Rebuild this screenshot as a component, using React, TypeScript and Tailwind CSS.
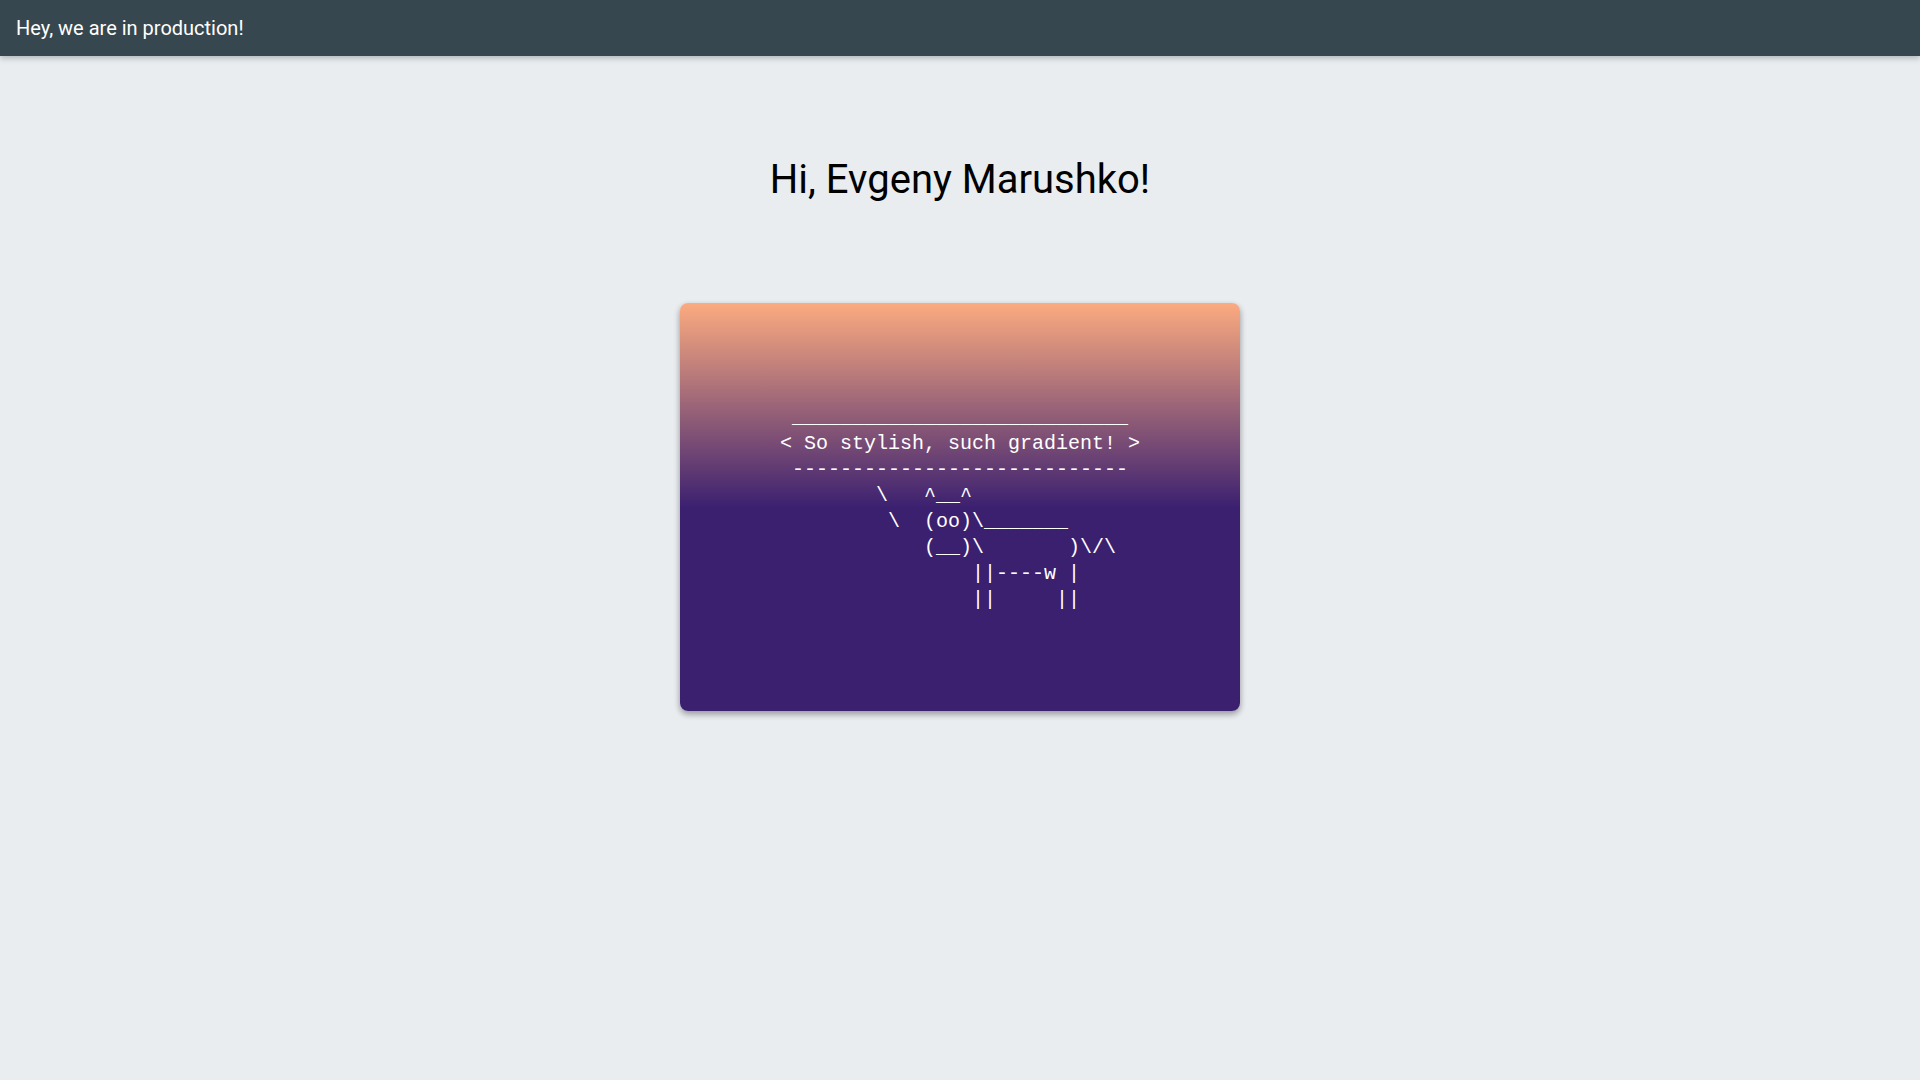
import React from "react"

// cowsay output, kept as plain lines so the backslashes stay literal
const cow = [
  String.raw` ____________________________`,
  String.raw`< So stylish, such gradient! >`,
  String.raw` ----------------------------`,
  String.raw`        \   ^__^`,
  String.raw`         \  (oo)\_______`,
  String.raw`            (__)\       )\/\ `,
  String.raw`                ||----w |`,
  String.raw`                ||     ||`,
].join("\n")

export default function App() {
  return (
    <div className="min-h-screen bg-[#e9edf0] font-['Roboto',sans-serif]">
      <header className="h-14 bg-[#37474f] px-4 flex items-center text-white text-[20px] shadow-[0_2px_6px_rgba(0,0,0,0.25)] relative">
        Hey, we are in production!
      </header>

      <main className="flex flex-col items-center">
        <h1 className="mt-[100px] text-[40px] leading-[47px] text-black font-normal">
          Hi, Evgeny Marushko!
        </h1>

        <div className="mt-[100px] w-[560px] h-[408px] rounded-lg flex items-center justify-center pt-[3px] bg-[linear-gradient(to_bottom,#fcab80_0%,#3c2070_50%,#3c2070_100%)] shadow-[0_3px_6px_rgba(0,0,0,0.16),0_3px_6px_rgba(0,0,0,0.23)]">
          <pre className="text-white text-[20px] leading-[26px] font-['Liberation_Mono',monospace]">
            {cow}
          </pre>
        </div>
      </main>
    </div>
  )
}
